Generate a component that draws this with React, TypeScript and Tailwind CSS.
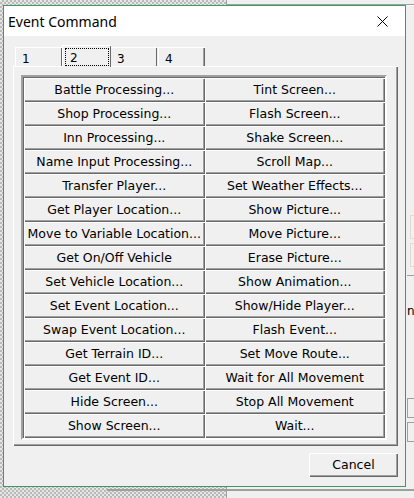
import React from 'react';

const leftCol = [
    'Battle Processing...',
    'Shop Processing...',
    'Inn Processing...',
    'Name Input Processing...',
    'Transfer Player...',
    'Get Player Location...',
    'Move to Variable Location...',
    'Get On/Off Vehicle',
    'Set Vehicle Location...',
    'Set Event Location...',
    'Swap Event Location...',
    'Get Terrain ID...',
    'Get Event ID...',
    'Hide Screen...',
    'Show Screen...',
];

const rightCol = [
    'Tint Screen...',
    'Flash Screen...',
    'Shake Screen...',
    'Scroll Map...',
    'Set Weather Effects...',
    'Show Picture...',
    'Move Picture...',
    'Erase Picture...',
    'Show Animation...',
    'Show/Hide Player...',
    'Flash Event...',
    'Set Move Route...',
    'Wait for All Movement',
    'Stop All Movement',
    'Wait...',
];

const btn =
    'h-[24px] flex items-center justify-center bg-[#f0f0f0] text-black text-[12.5px] whitespace-nowrap shadow-[inset_1px_1px_#ffffff,inset_-1px_-1px_#696969,inset_-2px_-2px_#a0a0a0]';

const App: React.FC = () => {
    const rows = leftCol.map((l, i) => [l, rightCol[i]]);

    return (
        <div
            className="relative w-[414px] h-[498px] overflow-hidden bg-[repeating-conic-gradient(#b9b9b9_0%_25%,#e6e6e6_0%_50%)] bg-[length:4px_4px]"
            style={{ fontFamily: '"DejaVu Sans", sans-serif' }}
        >
            {/* window behind the dialog */}
            <div className="absolute left-[226px] top-0 right-0 bottom-0 bg-[#f0f0f0] border-l border-[#a0a0a0]">
                <div className="mt-[4px] h-[2px] border-t border-[#a0a0a0] bg-white" />
                <div className="absolute left-[183px] top-[215px] w-[12px] h-[24px] bg-[#f6f1e4] border border-[#dcdcdc]" />
                <div className="absolute left-[183px] top-[243px] w-[12px] h-[24px] bg-[#f6f1e4] border border-[#dcdcdc]" />
                <div className="absolute left-[180px] top-[275px] w-[20px] border-t border-[#a0a0a0]" />
                <div className="absolute left-[180px] top-[302px] text-[12px] text-black">nt</div>
                <div className="absolute left-[180px] top-[398px] w-[20px] h-[20px] border border-[#a0a0a0]" />
                <div className="absolute left-[180px] top-[422px] w-[20px] h-[20px] border border-[#a0a0a0]" />
                <div className="absolute left-[-120px] top-[489px] w-[320px] border-t-2 border-[#a0a0a0]" />
            </div>

            {/* dialog */}
            <div className="absolute left-[3px] top-[5px] w-[403px] h-[482px] border border-[#3d9a60] bg-[#f0f0f0] flex flex-col">
                <div className="h-[30px] bg-white flex items-center justify-between pl-[4px] pr-[17px]">
                    <span className="text-[14px] text-black" style={{ fontFamily: '"Noto Sans", sans-serif' }}>
                        Event Command
                    </span>
                    <svg width="11" height="11" viewBox="0 0 11 11" className="mt-[1px]">
                        <path d="M0.5 0.5 L10.5 10.5 M10.5 0.5 L0.5 10.5" stroke="#000" strokeWidth="1" />
                    </svg>
                </div>

                <div className="flex-1 flex flex-col pt-[9px] pl-[9px]">
                    {/* tabs */}
                    <div className="flex items-end h-[21px] pl-[2px] text-[12px] text-black">
                        <div className="w-[47px] h-[19px] border-t border-l border-white shadow-[inset_-1px_0_#696969] pl-[6px] pt-[2px]">1</div>
                        <div className="relative z-10 w-[49px] h-[22px] -mb-[1px] bg-[#f0f0f0] border-t border-l border-white shadow-[inset_-1px_0_#696969] px-[2px] pt-[2px]">
                            <div className="h-[18px] border border-dotted border-black pl-[4px]">2</div>
                        </div>
                        <div className="w-[46px] h-[19px] border-t border-white shadow-[inset_-1px_0_#696969] pl-[6px] pt-[2px]">3</div>
                        <div className="ml-[1px] w-[47px] h-[19px] border-t border-l border-white shadow-[inset_-1px_0_#696969,inset_-2px_0_#a0a0a0] pl-[6px] pt-[2px]">4</div>
                    </div>

                    {/* tab panel */}
                    <div className="w-[385px] h-[380px] border-t border-l border-white shadow-[inset_-1px_-1px_#696969,inset_-2px_-2px_#a0a0a0] pl-[7px] pt-[8px]">
                        <div className="w-[366px] border-2 border-t-[#a0a0a0] border-l-[#a0a0a0] border-r-white border-b-white">
                            <div className="border-t border-l border-t-[#696969] border-l-[#696969] grid grid-cols-2">
                                {rows.map(([l, r]) => (
                                    <React.Fragment key={l}>
                                        <div className={btn}>{l}</div>
                                        <div className={btn}>{r}</div>
                                    </React.Fragment>
                                ))}
                            </div>
                        </div>
                    </div>

                    <div className="flex justify-end w-[385px] mt-[7px]">
                        <div className="w-[89px] h-[24px] flex items-center justify-center text-[12.5px] text-black bg-[#f0f0f0] shadow-[inset_1px_1px_#ffffff,inset_-1px_-1px_#696969,inset_-2px_-2px_#a0a0a0]">
                            Cancel
                        </div>
                    </div>
                </div>
            </div>
        </div>
    );
};

export default App;
